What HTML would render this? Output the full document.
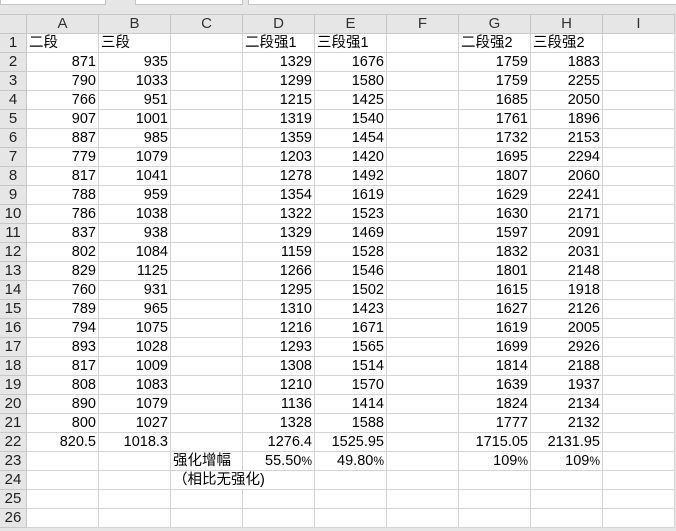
<!DOCTYPE html>
<html><head><meta charset="utf-8"><style>
body{margin:0;width:676px;height:531px;overflow:hidden;background:#e6e6e6;font-family:"Liberation Sans","Noto Sans CJK SC",sans-serif;position:relative}
.top{position:absolute;top:0;height:4px;background:#fff;border:1px solid #c6c6c6;border-top:none}
table{position:absolute;left:-1px;top:14px;border-collapse:collapse;table-layout:fixed;width:675px}
td{height:18px;padding:0 2px;border:1px solid #d4d4d4;background:#fff;font-size:14.5px;line-height:18px;white-space:nowrap;overflow:visible;text-align:right;color:#000}
tr.h td{background:#e6e6e6;text-align:center;color:#333;font-size:15px;border-color:#c8c8c8}
td.r{background:#e6e6e6;text-align:center;color:#222;font-size:15px;border-color:#c8c8c8;padding:0}
td.l{text-align:left}
.p{font-size:12px}
</style></head><body>
<div class="top" style="left:0;width:104px"></div>
<div class="top" style="left:135px;width:106px"></div>
<div class="top" style="left:248px;width:430px"></div>
<table>
<colgroup><col style="width:27px"><col style="width:72px"><col style="width:72px"><col style="width:72px"><col style="width:72px"><col style="width:72px"><col style="width:72px"><col style="width:72px"><col style="width:72px"><col style="width:72px"></colgroup>
<tr class="h"><td></td><td>A</td><td>B</td><td>C</td><td>D</td><td>E</td><td>F</td><td>G</td><td>H</td><td>I</td></tr>
<tr><td class="r">1</td><td class="l">二段</td><td class="l">三段</td><td></td><td class="l">二段强1</td><td class="l">三段强1</td><td></td><td class="l">二段强2</td><td class="l">三段强2</td><td></td></tr>
<tr><td class="r">2</td><td>871</td><td>935</td><td></td><td>1329</td><td>1676</td><td></td><td>1759</td><td>1883</td><td></td></tr>
<tr><td class="r">3</td><td>790</td><td>1033</td><td></td><td>1299</td><td>1580</td><td></td><td>1759</td><td>2255</td><td></td></tr>
<tr><td class="r">4</td><td>766</td><td>951</td><td></td><td>1215</td><td>1425</td><td></td><td>1685</td><td>2050</td><td></td></tr>
<tr><td class="r">5</td><td>907</td><td>1001</td><td></td><td>1319</td><td>1540</td><td></td><td>1761</td><td>1896</td><td></td></tr>
<tr><td class="r">6</td><td>887</td><td>985</td><td></td><td>1359</td><td>1454</td><td></td><td>1732</td><td>2153</td><td></td></tr>
<tr><td class="r">7</td><td>779</td><td>1079</td><td></td><td>1203</td><td>1420</td><td></td><td>1695</td><td>2294</td><td></td></tr>
<tr><td class="r">8</td><td>817</td><td>1041</td><td></td><td>1278</td><td>1492</td><td></td><td>1807</td><td>2060</td><td></td></tr>
<tr><td class="r">9</td><td>788</td><td>959</td><td></td><td>1354</td><td>1619</td><td></td><td>1629</td><td>2241</td><td></td></tr>
<tr><td class="r">10</td><td>786</td><td>1038</td><td></td><td>1322</td><td>1523</td><td></td><td>1630</td><td>2171</td><td></td></tr>
<tr><td class="r">11</td><td>837</td><td>938</td><td></td><td>1329</td><td>1469</td><td></td><td>1597</td><td>2091</td><td></td></tr>
<tr><td class="r">12</td><td>802</td><td>1084</td><td></td><td>1159</td><td>1528</td><td></td><td>1832</td><td>2031</td><td></td></tr>
<tr><td class="r">13</td><td>829</td><td>1125</td><td></td><td>1266</td><td>1546</td><td></td><td>1801</td><td>2148</td><td></td></tr>
<tr><td class="r">14</td><td>760</td><td>931</td><td></td><td>1295</td><td>1502</td><td></td><td>1615</td><td>1918</td><td></td></tr>
<tr><td class="r">15</td><td>789</td><td>965</td><td></td><td>1310</td><td>1423</td><td></td><td>1627</td><td>2126</td><td></td></tr>
<tr><td class="r">16</td><td>794</td><td>1075</td><td></td><td>1216</td><td>1671</td><td></td><td>1619</td><td>2005</td><td></td></tr>
<tr><td class="r">17</td><td>893</td><td>1028</td><td></td><td>1293</td><td>1565</td><td></td><td>1699</td><td>2926</td><td></td></tr>
<tr><td class="r">18</td><td>817</td><td>1009</td><td></td><td>1308</td><td>1514</td><td></td><td>1814</td><td>2188</td><td></td></tr>
<tr><td class="r">19</td><td>808</td><td>1083</td><td></td><td>1210</td><td>1570</td><td></td><td>1639</td><td>1937</td><td></td></tr>
<tr><td class="r">20</td><td>890</td><td>1079</td><td></td><td>1136</td><td>1414</td><td></td><td>1824</td><td>2134</td><td></td></tr>
<tr><td class="r">21</td><td>800</td><td>1027</td><td></td><td>1328</td><td>1588</td><td></td><td>1777</td><td>2132</td><td></td></tr>
<tr><td class="r">22</td><td>820.5</td><td>1018.3</td><td></td><td>1276.4</td><td>1525.95</td><td></td><td>1715.05</td><td>2131.95</td><td></td></tr>
<tr><td class="r">23</td><td></td><td></td><td class="l">强化增幅</td><td>55.50<span class="p">%</span></td><td>49.80<span class="p">%</span></td><td></td><td>109<span class="p">%</span></td><td>109<span class="p">%</span></td><td></td></tr>
<tr><td class="r">24</td><td></td><td></td><td class="l" style="border-right-color:#fff">（相比无强化)</td><td></td><td></td><td></td><td></td><td></td><td></td></tr>
<tr><td class="r">25</td><td></td><td></td><td></td><td></td><td></td><td></td><td></td><td></td><td></td></tr>
<tr><td class="r">26</td><td></td><td></td><td></td><td></td><td></td><td></td><td></td><td></td><td></td></tr>
</table>
</body></html>
